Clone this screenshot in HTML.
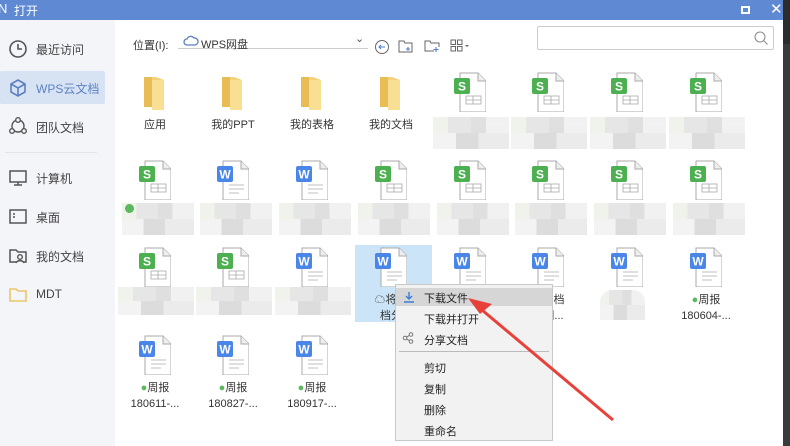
<!DOCTYPE html><html><head><meta charset="utf-8"><style>
*{margin:0;padding:0;box-sizing:border-box}
body{width:790px;height:446px;overflow:hidden;background:#fff;font-family:"Liberation Sans","Noto Sans CJK SC",sans-serif;font-size:11px;color:#333;position:relative}
.a{position:absolute}
.title{left:0;top:0;width:783px;height:20px;background:#5f89d2;color:#fff;font-size:12px}
.side{left:0;top:20px;width:115px;height:426px;background:#f4f5f9}
.si{position:absolute;left:36px;font-size:12px;color:#444}
.ico{position:absolute;left:8px}
.fold{position:absolute;width:22px;height:34px}
.doc{position:absolute;width:32px;height:40px}
.lab{position:absolute;width:78px;text-align:center;font-size:11px;color:#333;line-height:16px}
.blur{position:absolute;height:32px;background:linear-gradient(90deg,#edf1e8 0 20%,#e2e2e2 20% 50%,#dadada 50% 70%,#efefef 70%);opacity:.85}
.blur:after{content:"";position:absolute;left:0;right:0;top:50%;bottom:0;background:linear-gradient(90deg,#f1f1f1 0 30%,#d6d6d6 30% 60%,#e8e8e8 60%)}
.menu{left:395px;top:284px;width:158px;height:157px;background:#f2f2f2;border:1px solid #c8c8c8}
.mi{position:absolute;left:28px;font-size:11px;color:#222}
</style></head><body>
<div class="a title"><span class="a" style="left:-2px;top:1px;font-size:13px">N</span><span class="a" style="left:14px;top:2px">打开</span>
<div class="a" style="left:741px;top:6px;width:9px;height:8px;border:2px solid #fff"></div>
<span class="a" style="left:770px;top:0px;font-size:15px">✕</span></div>
<div class="a" style="left:783px;top:0;width:7px;height:446px;background:#3a3a3a"></div>
<div class="a" style="left:783px;top:0;width:7px;height:44px;background:#2c2c2c"></div>
<div class="a side">
<div class="a" style="left:0;top:51px;width:105px;height:33px;background:#d7e3f3;border-radius:2px"></div>
<svg class="ico" style="top:19px" width="20" height="20"><circle cx="10" cy="10" r="8" fill="none" stroke="#555" stroke-width="1.6"/><path d="M10 5v5h4" fill="none" stroke="#555" stroke-width="1.6"/></svg>
<span class="si" style="top:21px">最近访问</span>
<svg class="ico" style="top:58px" width="20" height="20"><path d="M10 2l7 4v8l-7 4-7-4V6z M3 6l7 4 7-4 M10 10v8" fill="none" stroke="#5b7fc0" stroke-width="1.6"/></svg>
<span class="si" style="top:60px;color:#5d82c4">WPS云文档</span>
<svg class="ico" style="top:96px" width="20" height="20"><circle cx="10" cy="10" r="6" fill="none" stroke="#555" stroke-width="1.4"/><circle cx="10" cy="4" r="2.3" fill="#f4f5f9" stroke="#555" stroke-width="1.4"/><circle cx="4" cy="15" r="2.3" fill="#f4f5f9" stroke="#555" stroke-width="1.4"/><circle cx="16" cy="15" r="2.3" fill="#f4f5f9" stroke="#555" stroke-width="1.4"/></svg>
<span class="si" style="top:99px">团队文档</span>
<div class="a" style="left:5px;top:132px;width:92px;height:1px;background:#e4e4e4"></div>
<svg class="ico" style="top:148px" width="20" height="20"><rect x="2" y="3" width="16" height="11" fill="none" stroke="#555" stroke-width="1.5"/><path d="M6 17h8M10 14v3" stroke="#555" stroke-width="1.5"/></svg>
<span class="si" style="top:150px">计算机</span>
<svg class="ico" style="top:187px" width="20" height="20"><rect x="2" y="3" width="16" height="13" fill="none" stroke="#555" stroke-width="1.5"/><path d="M5 7h2M5 10h2" stroke="#555" stroke-width="1.5"/></svg>
<span class="si" style="top:189px">桌面</span>
<svg class="ico" style="top:226px" width="20" height="20"><path d="M8 16H2V4h6l2 2h8v10h-2" fill="none" stroke="#555" stroke-width="1.5"/><circle cx="12" cy="11" r="2.3" fill="none" stroke="#555" stroke-width="1.4"/><path d="M8 17c1-3 7-3 8 0" fill="none" stroke="#555" stroke-width="1.4"/></svg>
<span class="si" style="top:228px">我的文档</span>
<svg class="ico" style="top:265px" width="20" height="20"><path d="M2 4h6l2 2h8v10H2z" fill="none" stroke="#e9c66a" stroke-width="1.6"/></svg>
<span class="si" style="top:267px">MDT</span>
</div>
<span class="a" style="left:133px;top:37px">位置(I):</span>
<div class="a" style="left:178px;top:48px;width:190px;height:1px;background:#ccc"></div>
<svg class="a" style="left:183px;top:35px" width="16" height="12"><path d="M4 10a3 3 0 010-6 4 4 0 017-1 3 3 0 011 7z" fill="none" stroke="#5b7fc0" stroke-width="1.3"/></svg>
<span class="a" style="left:201px;top:36px">WPS网盘</span>
<span class="a" style="left:355px;top:32px;font-size:11px;color:#555">⌄</span>
<svg class="a" style="left:374px;top:39px" width="16" height="16"><circle cx="8" cy="8" r="6.5" fill="none" stroke="#666"/><path d="M5 8h6M7 6l-2 2 2 2" fill="none" stroke="#4a7bd0"/></svg>
<svg class="a" style="left:397px;top:38px" width="18" height="16"><path d="M2 3h5l1 2h7v9H2z" fill="none" stroke="#666"/><path d="M11 9v4M9 11h4" stroke="#4a7bd0"/></svg>
<svg class="a" style="left:423px;top:38px" width="18" height="16"><path d="M11 13H2V3h5l1 2h8v4" fill="none" stroke="#666"/><path d="M13 9v5M10.5 11.5h5" stroke="#4a7bd0"/></svg>
<svg class="a" style="left:450px;top:39px" width="22" height="14"><g fill="none" stroke="#666"><rect x="1" y="1" width="4.5" height="4.5"/><rect x="7.5" y="1" width="4.5" height="4.5"/><rect x="1" y="7.5" width="4.5" height="4.5"/><rect x="7.5" y="7.5" width="4.5" height="4.5"/></g><path d="M15 6h4l-2 2z" fill="#666"/></svg>
<div class="a" style="left:537px;top:26px;width:237px;height:24px;border:1px solid #ccc;border-radius:2px"></div>
<svg class="a" style="left:753px;top:30px" width="16" height="16"><circle cx="7" cy="7" r="5" fill="none" stroke="#888"/><path d="M10.5 10.5l4 4" stroke="#888"/></svg>
<div class="a" style="left:355px;top:245px;width:77px;height:77px;background:#cce4f7"></div>
<div id="g"></div>
<div class="a menu">
<div class="a" style="left:0;top:3px;width:156px;height:18px;background:#d6d6d6"></div>
<svg class="a" style="left:7px;top:6px" width="12" height="12"><path d="M6 1v7M3 5l3 3 3-3M1 11h10" fill="none" stroke="#3b7bd8" stroke-width="1.4"/></svg>
<span class="mi" style="top:5px">下载文件</span>
<span class="mi" style="top:26px">下载并打开</span>
<svg class="a" style="left:6px;top:47px" width="12" height="12"><circle cx="9" cy="2.5" r="1.8" fill="none" stroke="#777"/><circle cx="3" cy="6" r="1.8" fill="none" stroke="#777"/><circle cx="9" cy="9.5" r="1.8" fill="none" stroke="#777"/><path d="M4.5 5l3-1.6M4.5 7l3 1.6" stroke="#777"/></svg>
<span class="mi" style="top:47px">分享文档</span>
<div class="a" style="left:3px;top:66px;width:150px;height:1px;background:#bbb"></div>
<span class="mi" style="top:75px">剪切</span>
<span class="mi" style="top:96px">复制</span>
<span class="mi" style="top:117px">删除</span>
<span class="mi" style="top:138px">重命名</span>
</div>
<svg class="a" style="left:0;top:0" width="790" height="446"><path d="M613 420L482 310" stroke="#e8413a" stroke-width="3" fill="none"/><path d="M468 298l24 6-12 10z" fill="#e8413a"/></svg>
<script>
var cols=[155,233,312,391,470,548,627,706];
var rows=[
['f:应用','f:我的PPT','f:我的表格','f:我的文档','s','s','s','s'],
['s','w','w','s','s','s','s','s'],
['s','s','w','w','w','w','w','w'],
['w','w','w']];
var ry=[72,160,247,335];
var h='';
rows.forEach(function(r,i){r.forEach(function(t,j){var cx=cols[j],y=ry[i];
if(t[0]=='f'){h+='<svg class="fold" style="left:'+(cx-12)+'px;top:'+(y+4)+'px" width="24" height="36"><path d="M1 1h12l8 3v30l-8-3H1z" fill="#f3d27a"/><path d="M1 1h8v30H1z" fill="#e8bd55"/><path d="M9 4l12 0v30l-12 0z" fill="#f8df94"/></svg>';
h+='<div class="lab" style="left:'+(cx-39)+'px;top:'+(y+45)+'px">'+t.slice(2)+'</div>';return;}
var c=t=='s'?'#4caf50':'#4a86e8',L=t=='s'?'S':'W';
h+='<svg class="doc" style="left:'+(cx-16)+'px;top:'+y+'px" width="34" height="42"><path d="M6 1h18l8 8v31H6z" fill="#fff" stroke="#aaa"/><path d="M24 1v8h8" fill="#eee" stroke="#aaa"/>'+(t=='s'?'<rect x="12" y="24" width="15" height="8" fill="none" stroke="#aaa" stroke-width=".8"/><path d="M12 28h15M19 24v8" stroke="#aaa" stroke-width=".8"/>':'<path d="M12 25h15M12 29h15M12 33h10" stroke="#aaa" stroke-width=".8"/>')+'<rect x="0" y="6" width="16" height="16" rx="2" fill="'+c+'"/><text x="8" y="18.5" font-size="12" font-weight="bold" fill="#fff" text-anchor="middle" font-family="Liberation Sans">'+L+'</text></svg>';
if(i==0)h+='<div class="blur" style="left:'+(cx-37)+'px;top:'+(y+45)+'px;width:76px"></div>';
if(i==1)h+='<div class="blur" style="left:'+(cx-33)+'px;top:'+(y+43)+'px;width:72px"></div>';
if(i==2&&j<3)h+='<div class="blur" style="left:'+(cx-37)+'px;top:'+(y+40)+'px;width:76px;height:28px"></div>';
});});
h+='<div class="a" style="left:125px;top:204px;width:9px;height:9px;border-radius:50%;background:#5cb85c"></div>';
var txt=[[391,247,'☁将我','档分'],[548,247,'云文档','协同...'],[706,247,'●周报','180604-...'],[155,335,'●周报','180611-...'],[233,335,'●周报','180827-...'],[312,335,'●周报','180917-...']];
txt.forEach(function(a){h+='<div class="lab" style="left:'+(a[0]-39)+'px;top:'+(a[1]+45)+'px">'+a[2].replace('●','<span style="color:#5cb85c">●</span>')+'<br>'+a[3]+'</div>';});
h+='<div class="blur" style="left:600px;top:290px;width:45px;height:30px;border-radius:12px"></div>';
document.getElementById('g').innerHTML=h;
</script>
</body></html>
